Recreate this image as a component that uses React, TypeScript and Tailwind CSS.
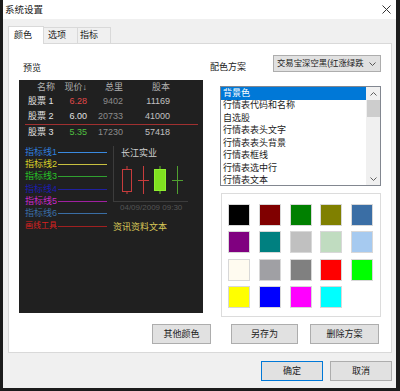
const swatches = [
  "#000000", "#800000", "#008000", "#808000", "#3a6ea5",
  "#800080", "#008080", "#c0c0c0", "#c0dcc0", "#a6caf0",
  "#fffbf0", "#a0a0a4", "#808080", "#ff0000", "#00ff00",
  "#ffff00", "#0000ff", "#ff00ff", "#00ffff",
];

const listItems = [
  "背景色",
  "行情表代码和名称",
  "自选股",
  "行情表表头文字",
  "行情表表头背景",
  "行情表框线",
  "行情表选中行",
  "行情表文本",
];

const indicators = [
  { label: "指标线1", text: "text-[#2f7fdc]", line: "bg-[#3a8ae0]" },
  { label: "指标线2", text: "text-[#d8d028]", line: "bg-[#c8c040]" },
  { label: "指标线3", text: "text-[#28c428]", line: "bg-[#30a030]" },
  { label: "指标线4", text: "text-[#1c1cb0]", line: "bg-[#2020a0]" },
  { label: "指标线5", text: "text-[#c828c8]", line: "bg-[#a020a0]" },
  { label: "指标线6", text: "text-[#3a6ea5]", line: "bg-[#3a6ea5]" },
  { label: "画线工具", text: "text-[#d82020] text-[8px]", line: "bg-[#a02020]" },
];

const rows = [
  { name: "股票 1", price: "6.28", priceColor: "text-[#e04848]", vol: "9402", cap: "11169", h: "h-[15px]" },
  { name: "股票 2", price: "6.00", priceColor: "text-[#e0e0e0]", vol: "20733", cap: "41000", h: "h-[14px]" },
];

function Candles() {
  return (
    <svg width="74" height="28" viewBox="0 0 74 28" className="mt-[7px]">
      <line x1="13" y1="0" x2="13" y2="28" stroke="#c83c3c" strokeWidth="1" />
      <rect x="8.5" y="3.5" width="9" height="22" fill="#202020" stroke="#c83c3c" strokeWidth="1" />
      <line x1="29.5" y1="0" x2="29.5" y2="28" stroke="#c83c3c" strokeWidth="1" />
      <line x1="24" y1="14.5" x2="35" y2="14.5" stroke="#c83c3c" strokeWidth="1" />
      <line x1="46" y1="0" x2="46" y2="28" stroke="#60c020" strokeWidth="1" />
      <rect x="40.5" y="3.5" width="11" height="21" fill="#80e020" stroke="#90f030" strokeWidth="1" />
      <line x1="63.5" y1="0" x2="63.5" y2="28" stroke="#50a030" strokeWidth="1" />
      <line x1="58" y1="14.5" x2="69" y2="14.5" stroke="#50a030" strokeWidth="1" />
    </svg>
  );
}

function Preview() {
  return (
    <div className="mt-[6px] h-[233px] w-[184px] bg-[#202020] flex flex-col text-[9px]">
      <div className="flex h-[14px] items-center text-[#b0b0b0] leading-none">
        <div className="w-[41px] pl-[18px]">名称</div>
        <div className="w-[27px] text-right">现价↓</div>
        <div className="w-[36px] text-right">总里</div>
        <div className="w-[47px] text-right">股本</div>
      </div>
      {rows.map((r) => (
        <div key={r.name} className={`flex ${r.h} items-center leading-none`}>
          <div className="w-[41px] pl-[9px] text-[#e0e0e0]">{r.name}</div>
          <div className={`w-[27px] text-right ${r.priceColor}`}>{r.price}</div>
          <div className="w-[36px] text-right text-[#8c8c8c]">{r.vol}</div>
          <div className="w-[47px] text-right text-[#c0c0c0]">{r.cap}</div>
        </div>
      ))}
      <div className="mt-px ml-[6px] h-px w-[173px] bg-[#a03030]" />
      <div className="flex h-[14px] items-center leading-none">
        <div className="w-[41px] pl-[9px] text-[#e0e0e0]">股票 3</div>
        <div className="w-[27px] text-right text-[#50c040]">5.35</div>
        <div className="w-[36px] text-right text-[#8c8c8c]">17230</div>
        <div className="w-[47px] text-right text-[#c0c0c0]">57418</div>
      </div>

      <div className="mt-[7px] flex">
        <div className="ml-[6px] w-[88px] flex flex-col">
          {indicators.map((it) => (
            <div key={it.label} className="flex h-[12.33px] items-center">
              <div className={`w-[33px] leading-none whitespace-nowrap ${it.text}`}>{it.label}</div>
              <div className={`h-px w-[49px] ${it.line}`} />
            </div>
          ))}
        </div>
        <div className="flex flex-col">
          <div className="h-[56px] w-[75px] border-l border-b border-[#3c3c3c] flex flex-col">
            <div className="mt-px pl-[7px] h-[12px] flex items-center leading-none text-[#d0d0d0]">长江实业</div>
            <Candles />
          </div>
          <div className="h-[12px] pl-[7px] flex items-center leading-none text-[8px] text-[#555555] whitespace-nowrap">
            04/09/2009 09:30
          </div>
          <div className="mt-[7px] h-[12px] flex items-center leading-none text-[#d8c858] whitespace-nowrap">
            资讯资料文本
          </div>
        </div>
      </div>
    </div>
  );
}

function Button({ label, w, focused = false }: { label: string; w: string; focused?: boolean }) {
  return (
    <div
      className={`${w} h-[20px] flex items-center justify-center leading-none bg-[#e1e1e1] border ${
        focused ? "border-[#0078d7]" : "border-[#adadad]"
      }`}
    >
      {label}
    </div>
  );
}

export default function App() {
  return (
    <div className="w-[400px] h-[391px] bg-[#1c1c1c] flex pl-[3px] pr-[4px] pb-[3px] font-['Liberation_Sans','Noto_Sans_CJK_SC',sans-serif] text-[9px] text-[#1a1a1a]">
      <div className="flex-1 flex flex-col bg-[#f0f0f0]">
        <div className="h-[19px] bg-white flex items-center justify-between pl-[2px] pr-[5px]">
          <span className="leading-none text-[9.5px]">系统设置</span>
          <svg width="9" height="9" viewBox="0 0 9 9">
            <path d="M0.5 0.5 L8.5 8.5 M8.5 0.5 L0.5 8.5" stroke="#333" strokeWidth="1" />
          </svg>
        </div>

        <div className="mt-[7px] ml-[5px] flex items-end h-[17px]">
          <div className="relative z-10 -mb-px h-[18px] w-[36px] bg-white border border-b-0 border-[#d9d9d9] pl-[5px] flex items-center leading-none">
            颜色
          </div>
          <div className="h-[16px] w-[34px] border-t border-r border-[#d9d9d9] pl-[4px] flex items-center leading-none">
            选项
          </div>
          <div className="h-[16px] w-[33px] border-t border-r border-[#d9d9d9] pl-[2px] flex items-center leading-none">
            指标
          </div>
        </div>

        <div className="ml-[5px] mr-[4px] h-[310px] bg-white border border-[#d9d9d9] flex flex-col">
          <div className="flex">
            <div className="ml-[10px] w-[184px] flex flex-col pt-[18px]">
              <div className="h-[12px] pl-[4px] flex items-center leading-none">预览</div>
              <Preview />
            </div>

            <div className="ml-[7px] w-[171px] flex flex-col pt-[11px]">
              <div className="flex h-[17px]">
                <div className="w-[63px] mt-[6px] h-[12px] flex items-center leading-none">配色方案</div>
                <div className="w-[108px] h-[17px] bg-[#e1e1e1] border border-[#adadad] flex items-center pl-[3px] pr-[4px]">
                  <span className="flex-1 leading-none whitespace-nowrap text-[8.4px]">交易宝深空黑(红涨绿跌</span>
                  <svg width="7" height="4" viewBox="0 0 7 4" className="shrink-0">
                    <path d="M0.5 0.5 L3.5 3.5 L6.5 0.5" stroke="#555" fill="none" strokeWidth="1" />
                  </svg>
                </div>
              </div>

              <div className="mt-[14px] ml-[10px] w-[161px] h-[100px] border border-[#828790] flex bg-white">
                <div className="flex-1 flex flex-col overflow-hidden">
                  {listItems.map((item, i) => (
                    <div
                      key={item}
                      className={`h-[12.5px] shrink-0 pl-[2px] flex items-center leading-none whitespace-nowrap ${
                        i === 0 ? "bg-[#0078d7] text-white" : ""
                      }`}
                    >
                      {item}
                    </div>
                  ))}
                </div>
                <div className="w-[14px] bg-[#f0f0f0] flex flex-col items-center">
                  <div className="h-[13px] flex items-center justify-center">
                    <svg width="7" height="4" viewBox="0 0 7 4">
                      <path d="M0.5 3.5 L3.5 0.5 L6.5 3.5" stroke="#606060" fill="none" strokeWidth="1" />
                    </svg>
                  </div>
                  <div className="h-[17px] w-[13px] bg-[#cdcdcd]" />
                  <div className="flex-1" />
                  <div className="h-[13px] flex items-center justify-center">
                    <svg width="7" height="4" viewBox="0 0 7 4">
                      <path d="M0.5 0.5 L3.5 3.5 L6.5 0.5" stroke="#606060" fill="none" strokeWidth="1" />
                    </svg>
                  </div>
                </div>
              </div>

              <div className="mt-[7px] ml-[11px] w-[160px] h-[124px] border border-[#dcdcdc] pl-[6px] pt-[10px]">
                <div className="grid grid-cols-[repeat(5,22px)] gap-x-[8.75px] gap-y-[5.3px]">
                  {swatches.map((c) => (
                    <div
                      key={c}
                      className="h-[22px] w-[22px] border border-[#d8d8d8]"
                      style={{ backgroundColor: c }}
                    />
                  ))}
                </div>
              </div>
            </div>
          </div>

          <div className="mt-[7px] flex justify-end pr-[12px]">
            <Button label="其他颜色" w="w-[59px]" />
            <div className="ml-[20px]">
              <Button label="另存为" w="w-[67px]" />
            </div>
            <div className="ml-[12px]">
              <Button label="删除方案" w="w-[69px]" />
            </div>
          </div>
        </div>

        <div className="mt-[8px] flex justify-end gap-[7px] pr-[4px]">
          <Button label="确定" w="w-[62px]" focused />
          <Button label="取消" w="w-[62px]" />
        </div>
      </div>
    </div>
  );
}
